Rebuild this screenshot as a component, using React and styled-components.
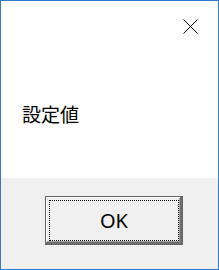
import React from 'react'
import styled, { createGlobalStyle } from 'styled-components'

const Global = createGlobalStyle`
  html, body {
    margin: 0;
    padding: 0;
    background: #ffffff;
  }
`

const Window = styled.div`
  width: 219px;
  height: 270px;
  box-sizing: border-box;
  border: 1px solid #2f7bc7;
  display: flex;
  flex-direction: column;
  background: #ffffff;
`

const Content = styled.div`
  height: 177px;
  display: flex;
  flex-direction: column;
  background: #ffffff;
`

const TitleBar = styled.div`
  display: flex;
  justify-content: flex-end;
  padding: 18px 20px 0 0;
`

const CloseButton = styled.div`
  width: 15px;
  height: 15px;
  display: flex;
`

const Message = styled.div`
  margin: 68px 0 0 21px;
  font-family: "Noto Sans CJK JP", "Noto Sans", sans-serif;
  font-size: 19px;
  line-height: 24px;
  color: #000000;
`

const Footer = styled.div`
  flex: 1;
  background: #f0f0f0;
  padding: 18px 0 0 44px;
`

const Button = styled.button`
  width: 138px;
  height: 49px;
  box-sizing: border-box;
  padding: 0;
  margin: 0;
  border: 1px solid #666666;
  background: #f0f0f0;
  box-shadow: inset -2px -2px 0 #6e6e6e, inset 1px 1px 0 #ffffff, inset -3px -3px 0 #a0a0a0;
  outline: 1px dotted #000000;
  outline-offset: -5px;
  font-family: "Noto Sans", "Open Sans", sans-serif;
  font-size: 20px;
  color: #000000;
  display: flex;
  align-items: center;
  justify-content: center;
`

export default function App() {
  return (
    <>
      <Global />
      <Window>
        <Content>
          <TitleBar>
            <CloseButton>
              <svg width="15" height="15" viewBox="0 0 15 15">
                <path d="M0.5 0.5 L14.5 14.5 M14.5 0.5 L0.5 14.5" stroke="#000" strokeWidth="1" fill="none" />
              </svg>
            </CloseButton>
          </TitleBar>
          <Message>設定値</Message>
        </Content>
        <Footer>
          <Button>OK</Button>
        </Footer>
      </Window>
    </>
  )
}
